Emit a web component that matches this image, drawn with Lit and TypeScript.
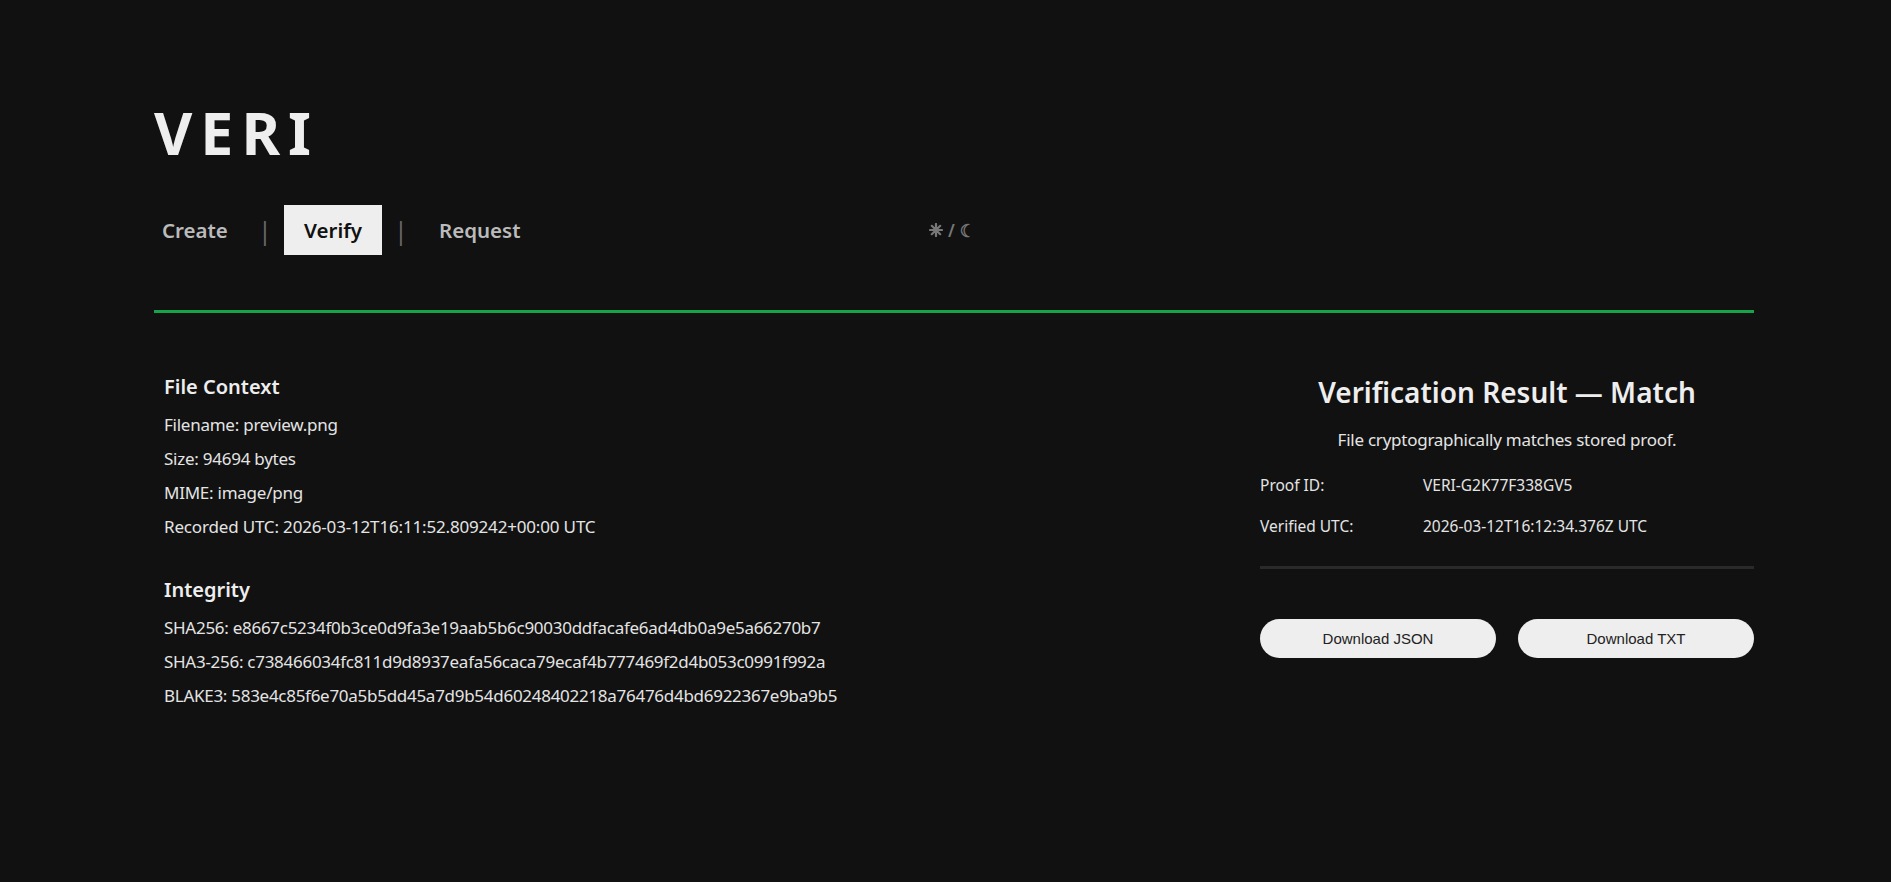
import { LitElement, html, css } from "lit";
import { customElement } from "lit/decorators.js";

@customElement("app-root")
export class AppRoot extends LitElement {
  static styles = css`
    :host { display: block; min-height: 882px; background: #111; color: #eee; font-family: "Noto Sans", "Open Sans", sans-serif; }
    .wrap { width: 1600px; margin-left: 154px; padding-top: 95px; box-sizing: border-box; }
    .logo { font-size: 59px; font-weight: 700; letter-spacing: 8px; line-height: 74px; color: #eee; }
    .nav { display: flex; align-items: center; gap: 13px; height: 50px; margin-top: 36px; width: 817px; }
    .tab { font-size: 20.5px; font-weight: 600; color: #bbb; height: 50px; display: flex; align-items: center; box-sizing: border-box; }
    .create { width: 92px; padding-left: 8px; }
    .request { padding-left: 19px; }
    .tab.on { background: #eee; color: #111; width: 98px; justify-content: center; }
    .sep { color: #666; font-size: 25px; width: 12px; display: flex; justify-content: center; }
    .toggle { margin-left: auto; width: 42px; overflow: hidden; display: flex; align-items: center; gap: 5px; white-space: nowrap; color: #777; font-size: 17px; font-weight: 600; }
    .toggle svg { flex: none; }
    .moon { font-family: "DejaVu Sans", sans-serif; font-size: 18px; font-weight: 400; color: #777; -webkit-text-stroke: 0.5px #777; }
    .rule { height: 3px; background: #16a34a; margin-top: 55px; }
    .main { display: flex; justify-content: space-between; margin-top: 60px; }
    .left { padding-left: 10px; }
    h3 { margin: 0; font-size: 20px; font-weight: 600; line-height: 27px; color: #eee; }
    p { margin: 7px 0 0; font-size: 17px; line-height: 27px; color: #e4e4e4; letter-spacing: -0.25px; white-space: nowrap; }
    h3 + p { margin-top: 11px; }
    .utc { letter-spacing: -0.17px; }
    .hash { letter-spacing: -0.28px; }
    .group + .group { margin-top: 36px; }
    .right { width: 494px; }
    h2 { margin: 0; text-align: center; font-size: 28px; font-weight: 600; line-height: 38px; color: #eee; }
    .sub { margin-top: 15px; text-align: center; }
    .row { display: flex; font-size: 15.5px; line-height: 19px; color: #e4e4e4; }
    .row span:first-child { width: 163px; }
    .rows { display: grid; gap: 22px; margin-top: 23px; }
    .divider { height: 3px; background: #2a2a2a; margin-top: 30px; }
    .btns { display: flex; gap: 22px; margin-top: 50px; }
    .btn { flex: 1; height: 39px; border: 0; border-radius: 20px; background: #eee; color: #222; font: 15px "Liberation Sans", Arial, sans-serif; }
  `;

  render() {
    return html`<div class="wrap">
      <div class="logo">VERI</div>
      <div class="nav">
        <span class="tab create">Create</span><span class="sep">|</span>
        <span class="tab on">Verify</span><span class="sep">|</span>
        <span class="tab request">Request</span>
        <span class="toggle">
          <svg width="14" height="14" viewBox="0 0 14 14" stroke="currentColor" stroke-width="2.2" stroke-linecap="round" aria-hidden="true">
            <path d="M7 1v12M1 7h12M2.8 2.8l8.4 8.4M11.2 2.8l-8.4 8.4"/>
          </svg>
          <span>/</span><span class="moon">☾</span>
        </span>
      </div>
      <div class="rule"></div>
      <div class="main">
        <div class="left">
          <div class="group">
            <h3>File Context</h3>
            <p>Filename: preview.png</p><p>Size: 94694 bytes</p><p>MIME: image/png</p>
            <p class="utc">Recorded UTC: 2026-03-12T16:11:52.809242+00:00 UTC</p>
          </div>
          <div class="group">
            <h3>Integrity</h3>
            <p class="hash">SHA256: e8667c5234f0b3ce0d9fa3e19aab5b6c90030ddfacafe6ad4db0a9e5a66270b7</p>
            <p class="hash">SHA3-256: c738466034fc811d9d8937eafa56caca79ecaf4b777469f2d4b053c0991f992a</p>
            <p class="hash">BLAKE3: 583e4c85f6e70a5b5dd45a7d9b54d60248402218a76476d4bd6922367e9ba9b5</p>
          </div>
        </div>
        <div class="right">
          <h2>Verification Result — Match</h2>
          <p class="sub">File cryptographically matches stored proof.</p>
          <div class="rows">
            <div class="row"><span>Proof ID:</span><span>VERI-G2K77F338GV5</span></div>
            <div class="row"><span>Verified UTC:</span><span>2026-03-12T16:12:34.376Z UTC</span></div>
          </div>
          <div class="divider"></div>
          <div class="btns"><button class="btn">Download JSON</button><button class="btn">Download TXT</button></div>
        </div>
      </div>
    </div>`;
  }
}
